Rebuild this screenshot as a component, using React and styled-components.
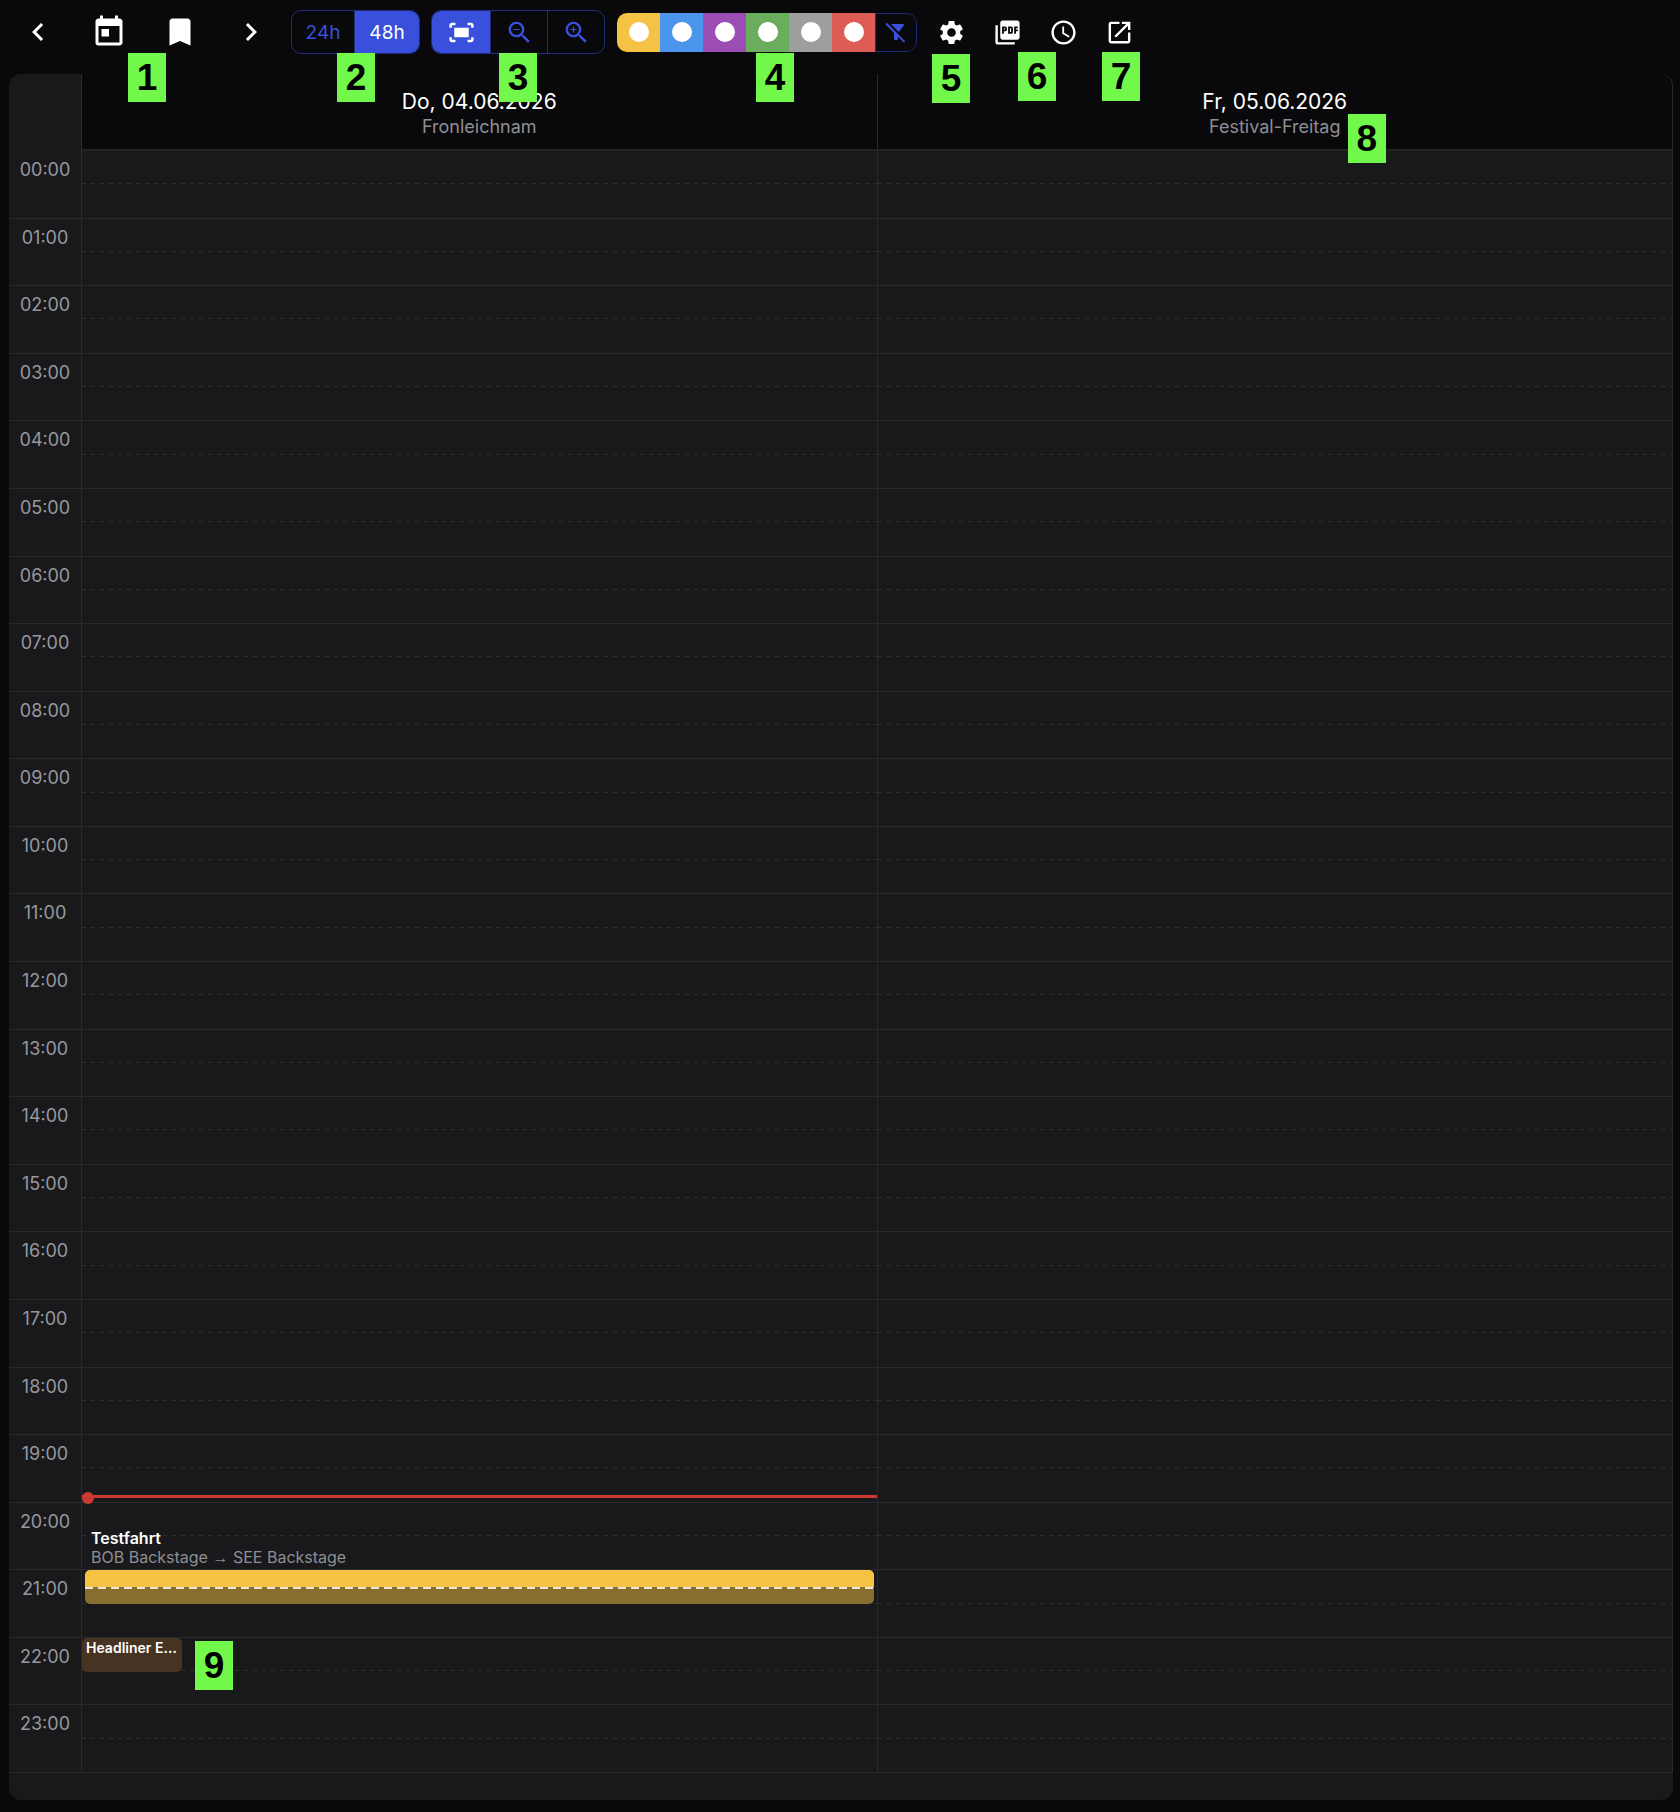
import React, { useState } from "react";
import styled, { createGlobalStyle } from "styled-components";
import {
  MdAccessTime,
  MdBookmark,
  MdChevronLeft,
  MdChevronRight,
  MdFilterAltOff,
  MdFitScreen,
  MdLaunch,
  MdPictureAsPdf,
  MdSettings,
  MdToday,
  MdZoomIn,
  MdZoomOut,
} from "react-icons/md";

const GlobalStyle = createGlobalStyle`
  * {
    box-sizing: border-box;
  }
  body {
    margin: 0;
    background: #09090b;
    color: #ffffff;
    font-family: "Inter", sans-serif;
  }
  button {
    margin: 0;
    padding: 0;
    border: none;
    background: none;
    color: inherit;
    font: inherit;
    cursor: pointer;
  }
`;

const Page = styled.div`
  display: flex;
  flex-direction: column;
  min-height: 100vh;
  padding: 0 7px 12px 9px;
`;

const Toolbar = styled.header`
  display: flex;
  align-items: center;
  height: 64px;
  margin: 0 0 10px -7px;
`;

const Nav = styled.nav`
  position: relative;
  display: flex;
  margin-right: 5px;
`;

const IconButton = styled.button`
  display: flex;
  align-items: center;
  justify-content: center;
  width: ${(props) => props.$width}px;
  height: 44px;
`;

const Anchor = styled.div`
  position: relative;
  margin-right: ${(props) => props.$gap || 0}px;
`;

const Group = styled.div`
  display: flex;
  height: ${(props) => props.$height}px;
  border: 1px solid #202c75;
  border-radius: 10px;
  overflow: hidden;
`;

const Segment = styled.button`
  display: flex;
  align-items: center;
  justify-content: center;
  width: ${(props) => props.$width}px;
  font-size: 19px;
  color: ${(props) => (props.$active ? "#ffffff" : "#3850dc")};
  background: ${(props) => (props.$active ? "#3850dc" : "transparent")};
  & + & {
    border-left: 1px solid #202c75;
  }
`;

const ColorGroup = styled.div`
  display: flex;
  height: 39px;
  border-radius: 10px;
  overflow: hidden;
`;

const ColorButton = styled.button`
  display: flex;
  align-items: center;
  justify-content: center;
  width: 43px;
  background: ${(props) => props.$color};
  &::before {
    content: "";
    width: 20px;
    height: 20px;
    border-radius: 50%;
    background: #ffffff;
  }
`;

const ClearFilter = styled.button`
  display: flex;
  align-items: center;
  justify-content: center;
  width: 42px;
  color: #3850dc;
  border: 1px solid #202c75;
  border-radius: 0 10px 10px 0;
`;

const Tools = styled.div`
  display: flex;
`;

const Badge = styled.span`
  position: absolute;
  top: ${(props) => props.$top}px;
  left: ${(props) => props.$left};
  z-index: 5;
  width: 38px;
  height: 49px;
  background: #72f84a;
  color: #000000;
  font-family: "Liberation Sans", sans-serif;
  font-size: 37px;
  font-weight: 700;
  line-height: 50px;
  text-align: center;
`;

const Calendar = styled.main`
  display: flex;
  flex: 1;
  flex-direction: column;
  padding-bottom: 27px;
  border-radius: 12px;
  background: #19191b;
`;

const DayHeader = styled.div`
  display: grid;
  grid-template-columns: 73px 1fr 1fr;
  height: 77px;
`;

const DayTitle = styled.div`
  position: relative;
  display: flex;
  flex-direction: column;
  align-items: center;
  padding-top: 14px;
  background: #09090b;
  border-right: 1px solid #2a2a2d;
  border-bottom: 2px solid #232325;
  &:last-child {
    border-top-right-radius: 12px;
  }
`;

const Corner = styled.div`
  border-right: 1px solid #2a2a2d;
`;

const DayName = styled.h2`
  margin: 0;
  font-size: 21px;
  font-weight: 400;
  line-height: 28px;
`;

const DayNote = styled.p`
  margin: 0;
  color: #8e8e95;
  font-size: 18px;
  line-height: 22px;
`;

const Body = styled.div`
  display: grid;
  flex: 1;
  grid-template-columns: 73px 1fr 1fr;
`;

const Column = styled.div`
  position: relative;
  display: grid;
  grid-template-rows: repeat(24, 1fr);
  border-right: 1px solid #2a2a2d;
`;

const HourLabel = styled.div`
  min-height: 40px;
  padding-top: 8px;
  color: #97979e;
  font-size: 18px;
  line-height: 22px;
  text-align: center;
  border-bottom: 1px solid #2a2a2d;
`;

const HourCell = styled.div`
  display: flex;
  border-bottom: 1px solid #2a2a2d;
  &::before {
    content: "";
    width: 100%;
    height: 50%;
    background: repeating-linear-gradient(
        90deg,
        #2e2e31 0 4px,
        transparent 4px 9px
      )
      left bottom / 100% 1px no-repeat;
  }
`;

const NowLine = styled.div`
  position: absolute;
  left: 0;
  right: 0;
  height: 3px;
  background: #cb3a31;
  &::before {
    content: "";
    position: absolute;
    top: -3px;
    left: 0;
    width: 12px;
    height: 12px;
    border-radius: 50%;
    background: #cb3a31;
  }
`;

const Trip = styled.article`
  position: absolute;
  left: 3px;
  right: 3px;
`;

const TripBar = styled.div`
  height: 100%;
  border-radius: 5px;
  background: linear-gradient(#f4c245 50%, #876e30 50%);
  &::after {
    content: "";
    position: absolute;
    top: 50%;
    left: 0;
    right: 0;
    height: 2px;
    background: repeating-linear-gradient(
      90deg,
      #eae5d8 0 8px,
      transparent 8px 13px
    );
  }
`;

const TripText = styled.div`
  position: absolute;
  bottom: 100%;
  left: 6px;
  padding-bottom: 3px;
  color: #8e8e95;
  font-size: 16px;
  line-height: 19px;
  white-space: nowrap;
`;

const TripTitle = styled.strong`
  display: block;
  color: #ffffff;
  font-weight: 600;
`;

const Arrow = styled.span`
  font-family: "Liberation Sans", sans-serif;
`;

const Show = styled.article`
  position: absolute;
  left: 0;
  width: 100px;
  padding: 0 4px;
  border-radius: 5px;
  background: #463322;
  font-size: 14px;
  font-weight: 600;
  line-height: 20px;
`;

const ShowTitle = styled.div`
  overflow: hidden;
  text-overflow: ellipsis;
  white-space: nowrap;
`;

const hours = Array.from(
  { length: 24 },
  (_, hour) => `${String(hour).padStart(2, "0")}:00`
);

const categories = [
  { name: "Gelb", color: "#f4c245" },
  { name: "Blau", color: "#4b95ed" },
  { name: "Lila", color: "#9d4db6" },
  { name: "Grün", color: "#69ad5d" },
  { name: "Grau", color: "#9e9e9e" },
  { name: "Rot", color: "#dd5d56" },
];

// position of a time span inside a day column
const span = (start, length) => ({
  top: `${(start / 24) * 100}%`,
  height: length ? `${(length / 24) * 100}%` : undefined,
});

const HourCells = () => hours.map((hour) => <HourCell key={hour} />);

export default function App() {
  const [range, setRange] = useState("48h");

  return (
    <Page>
      <GlobalStyle />
      <Toolbar>
        <Nav>
          <IconButton $width={71} aria-label="Zurück">
            <MdChevronLeft size={36} />
          </IconButton>
          <IconButton $width={71} aria-label="Heute">
            <MdToday size={36} />
          </IconButton>
          <IconButton $width={71} aria-label="Lesezeichen">
            <MdBookmark size={36} />
          </IconButton>
          <IconButton $width={71} aria-label="Weiter">
            <MdChevronRight size={36} />
          </IconButton>
          <Badge $top={43} $left="126px">1</Badge>
        </Nav>
        <Anchor $gap={11}>
          <Group $height={44}>
            {["24h", "48h"].map((value) => (
              <Segment
                key={value}
                $width={value === "24h" ? 62 : 65}
                $active={range === value}
                onClick={() => setRange(value)}
              >
                {value}
              </Segment>
            ))}
          </Group>
          <Badge $top={43} $left="46px">2</Badge>
        </Anchor>
        <Anchor $gap={12}>
          <Group $height={44}>
            <Segment $width={58} $active aria-label="Einpassen">
              <MdFitScreen size={29} />
            </Segment>
            <Segment $width={57} aria-label="Verkleinern">
              <MdZoomOut size={29} />
            </Segment>
            <Segment $width={57} aria-label="Vergrößern">
              <MdZoomIn size={29} />
            </Segment>
          </Group>
          <Badge $top={43} $left="68px">3</Badge>
        </Anchor>
        <Anchor $gap={6}>
          <ColorGroup>
            {categories.map(({ name, color }) => (
              <ColorButton key={name} $color={color} aria-label={name} />
            ))}
            <ClearFilter aria-label="Filter zurücksetzen">
              <MdFilterAltOff size={24} />
            </ClearFilter>
          </ColorGroup>
          <Badge $top={40} $left="139px">4</Badge>
        </Anchor>
        <Tools>
          <Anchor>
            <IconButton $width={56} aria-label="Einstellungen">
              <MdSettings size={29} />
            </IconButton>
            <Badge $top={44} $left="9px">5</Badge>
          </Anchor>
          <Anchor>
            <IconButton $width={56} aria-label="PDF">
              <MdPictureAsPdf size={29} />
            </IconButton>
            <Badge $top={42} $left="39px">6</Badge>
          </Anchor>
          <IconButton $width={56} aria-label="Uhrzeit">
            <MdAccessTime size={29} />
          </IconButton>
          <Anchor>
            <IconButton $width={56} aria-label="In neuem Fenster öffnen">
              <MdLaunch size={29} />
            </IconButton>
            <Badge $top={42} $left="11px">7</Badge>
          </Anchor>
        </Tools>
      </Toolbar>
      <Calendar>
        <DayHeader>
          <Corner />
          <DayTitle>
            <DayName>Do, 04.06.2026</DayName>
            <DayNote>Fronleichnam</DayNote>
          </DayTitle>
          <DayTitle>
            <DayName>Fr, 05.06.2026</DayName>
            <DayNote>Festival-Freitag</DayNote>
            <Badge $top={40} $left="calc(50% + 73px)">8</Badge>
          </DayTitle>
        </DayHeader>
        <Body>
          <Column>
            {hours.map((hour) => (
              <HourLabel key={hour}>{hour}</HourLabel>
            ))}
          </Column>
          <Column>
            <HourCells />
            <NowLine style={span(19.88)} />
            <Trip style={span(21, 0.5)}>
              <TripText>
                <TripTitle>Testfahrt</TripTitle>
                BOB Backstage <Arrow>→</Arrow> SEE Backstage
              </TripText>
              <TripBar />
            </Trip>
            <Show style={span(22, 0.5)}>
              <ShowTitle>Headliner Event</ShowTitle>
              <Badge $top={3} $left="113px">9</Badge>
            </Show>
          </Column>
          <Column>
            <HourCells />
          </Column>
        </Body>
      </Calendar>
    </Page>
  );
}
